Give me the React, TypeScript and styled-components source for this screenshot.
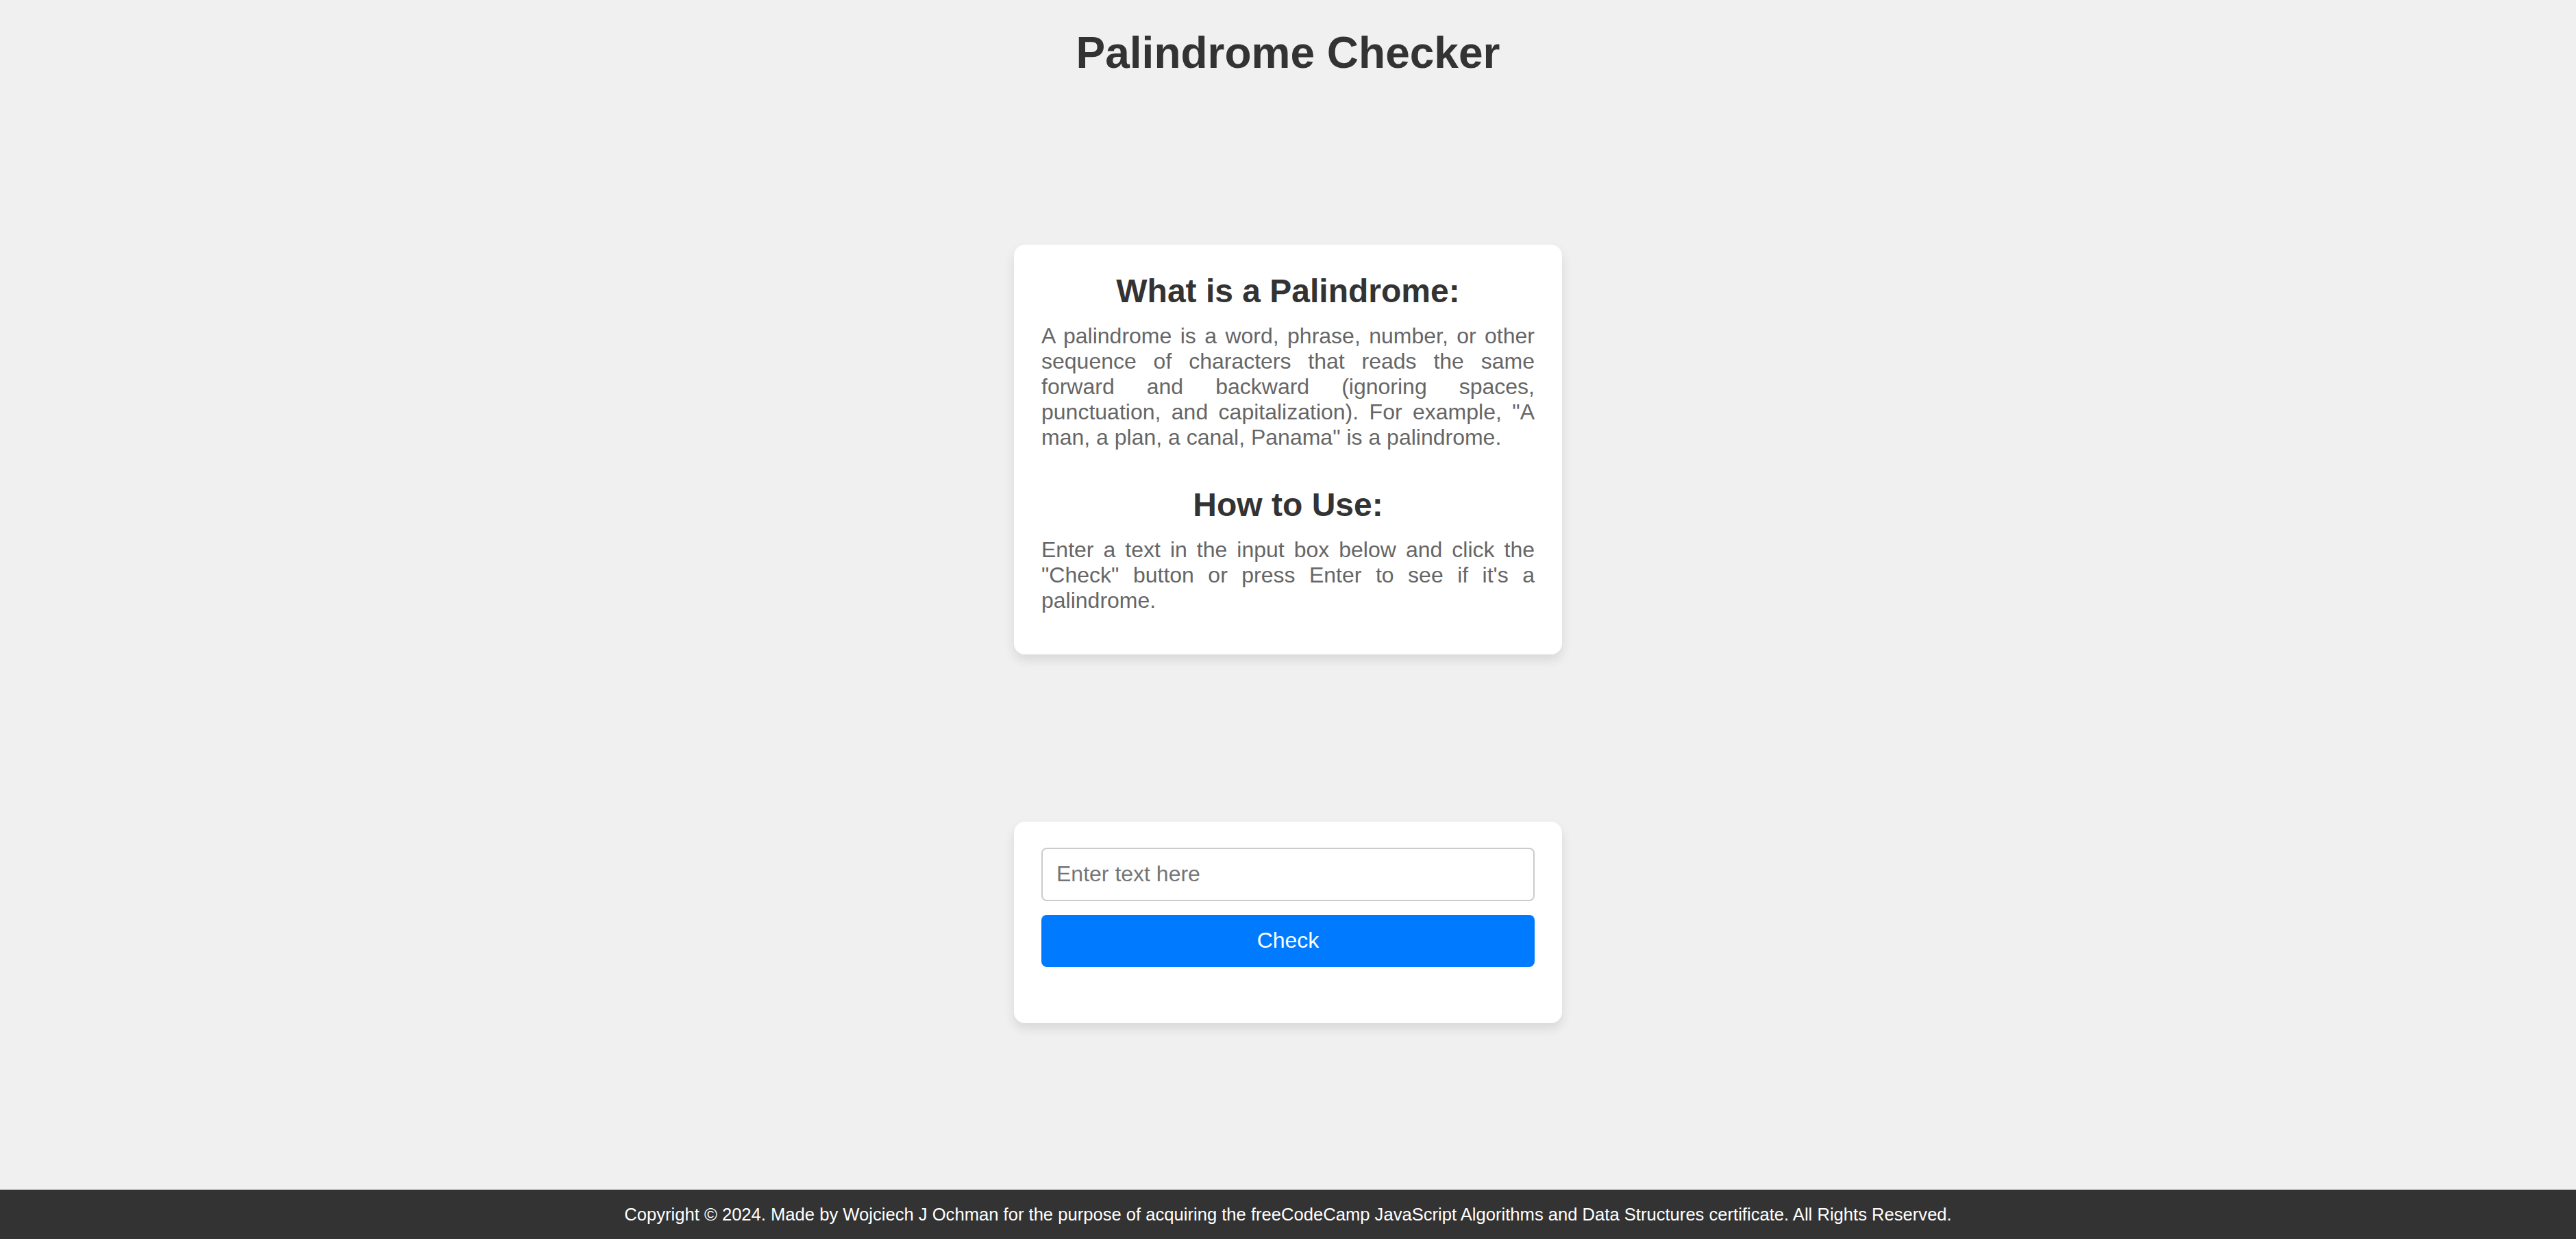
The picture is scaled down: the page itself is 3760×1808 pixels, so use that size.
import styled, { createGlobalStyle } from "styled-components";

const GlobalStyle = createGlobalStyle`
  html, body {
    margin: 0;
    padding: 0;
  }

  body {
    background: #f0f0f0;
    font-family: "Liberation Sans", Arial, sans-serif;
    font-size: 32px;
    color: #333;
  }
`;

export default function App() {
  return (
    <>
      <GlobalStyle />
      <Page>
        <Title>Palindrome Checker</Title>
        <Main>
          <Card>
            <Section>
              <Heading>What is a Palindrome:</Heading>
              <Text>
                A palindrome is a word, phrase, number, or other sequence of
                characters that reads the same forward and backward (ignoring
                spaces, punctuation, and capitalization). For example, "A man,
                a plan, a canal, Panama" is a palindrome.
              </Text>
            </Section>
            <Section>
              <Heading>How to Use:</Heading>
              <Text>
                Enter a text in the input box below and click the "Check"
                button or press Enter to see if it's a palindrome.
              </Text>
            </Section>
          </Card>
          <Card>
            <Input type="text" placeholder="Enter text here" />
            <CheckButton>Check</CheckButton>
            <Result />
          </Card>
        </Main>
        <Footer>
          Copyright © 2024. Made by Wojciech J Ochman for the purpose of
          acquiring the freeCodeCamp JavaScript Algorithms and Data Structures
          certificate. All Rights Reserved.
        </Footer>
      </Page>
    </>
  );
}

const Page = styled.div`
  min-height: 100vh;
  display: flex;
  flex-direction: column;
`;

const Title = styled.h1`
  margin: 40px 0 0;
  font-size: 64px;
  font-weight: bold;
  text-align: center;
  color: #333;
`;

const Main = styled.main`
  flex: 1;
  display: flex;
  flex-direction: column;
  align-items: center;
  justify-content: space-evenly;
`;

const Card = styled.div`
  box-sizing: border-box;
  width: 800px;
  padding: 40px;
  background: #fff;
  border-radius: 16px;
  box-shadow: 0 8px 16px rgba(0, 0, 0, 0.1);
  display: flex;
  flex-direction: column;
  gap: 32px;
`;

const Section = styled.section`
  display: flex;
  flex-direction: column;
`;

const Heading = styled.h2`
  margin: 0 0 20px;
  font-size: 48px;
  font-weight: bold;
  text-align: center;
  color: #333;
`;

const Text = styled.p`
  margin: 0 0 20px;
  font-size: 32px;
  text-align: justify;
  color: #666;
`;

const Input = styled.input`
  box-sizing: border-box;
  width: 100%;
  height: 78px;
  margin-top: -2px;
  padding: 0 20px;
  border: 2px solid #ccc;
  border-radius: 8px;
  font-family: inherit;
  font-size: 32px;
  color: #333;
  outline: none;

  &::placeholder {
    color: #757575;
  }
`;

const CheckButton = styled.button`
  box-sizing: border-box;
  width: 100%;
  height: 76px;
  margin-top: -12px;
  border: none;
  border-radius: 8px;
  background: #007bff;
  color: #fff;
  font-family: inherit;
  font-size: 32px;
  cursor: pointer;
`;

const Result = styled.div`
  min-height: 10px;
`;

const Footer = styled.footer`
  background: #333;
  color: #fff;
  text-align: center;
  font-size: 25.6px;
  line-height: 32px;
  padding: 20px 0;
`;
